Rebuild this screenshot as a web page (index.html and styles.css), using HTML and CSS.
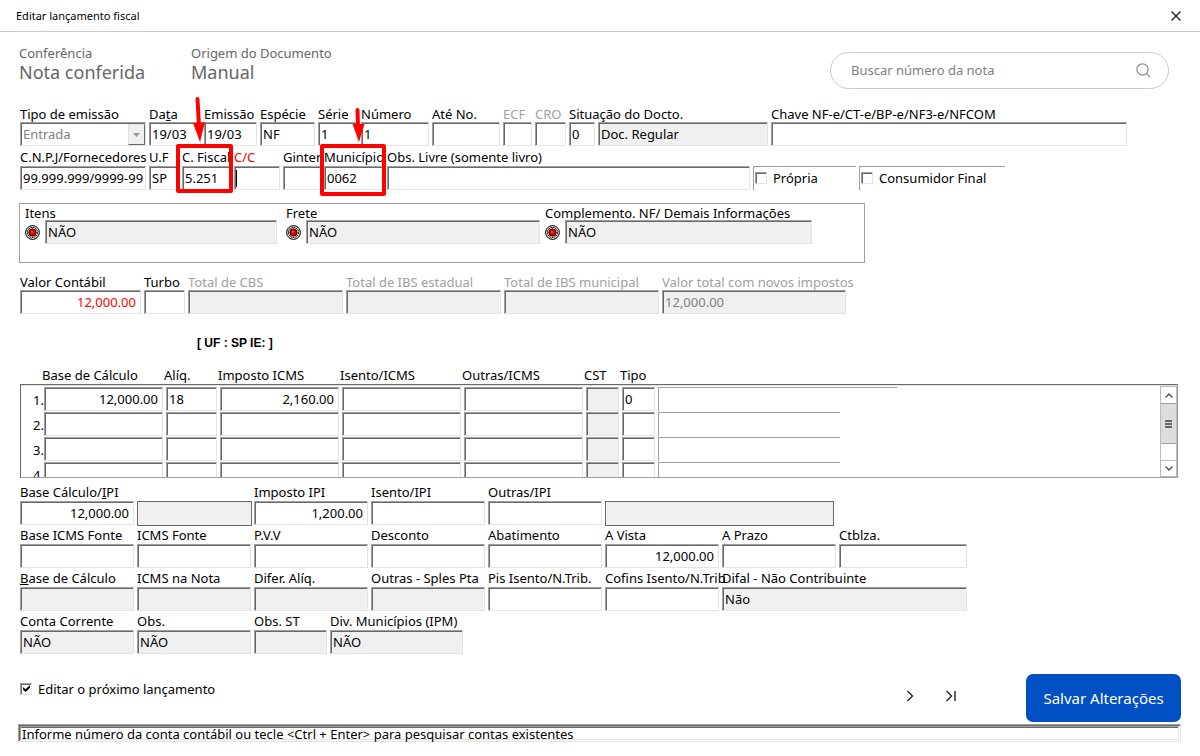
FILE: index.html
```html
<!DOCTYPE html>
<html lang="pt-BR">
<head>
<meta charset="utf-8">
<title>Editar lançamento fiscal</title>
<link rel="stylesheet" href="styles.css">
</head>
<body>
<svg class="defs" aria-hidden="true">
  <symbol id="led" viewBox="0 0 15 15">
    <circle cx="7.5" cy="7.5" r="6.900" fill="#d8d8d8" stroke="#000"/>
    <circle cx="7.5" cy="7.5" r="5" fill="#8a8a8a" stroke="#000" stroke-dasharray="1.5 .8"/>
    <circle cx="7.5" cy="7.5" r="3.500" fill="#e00000" stroke="#4a0000"/>
    <path d="M5.500 3.500h1M8.500 3.500h1M5.500 11.500h1M8.500 11.500h1M3.500 5.500v1M3.500 8.500v1M11.500 5.500v1M11.500 8.500v1" stroke="#ffd0d0"/>
    <circle cx="7" cy="7" r="1.200" fill="#ff3a2a"/>
  </symbol>
</svg>

<header class="titlebar">
  <h1 class="title">Editar lançamento fiscal</h1>
  <button class="close" type="button" aria-label="Fechar">
    <svg width="10" height="10" viewBox="0 0 10 10"><path d="M.5.5l9 9M9.5.5l-9 9" stroke="#222" stroke-width="1.4"/></svg>
  </button>
</header>

<main class="page">
  <section class="summary">
    <div class="summary-item">
      <div class="summary-label">Conferência</div>
      <div class="summary-value">Nota conferida</div>
    </div>
    <div class="summary-item">
      <div class="summary-label">Origem do Documento</div>
      <div class="summary-value">Manual</div>
    </div>
    <label class="search">
      <input class="search-input" type="text" placeholder="Buscar número da nota" aria-label="Buscar número da nota">
      <svg width="15" height="15" viewBox="0 0 15 15" fill="none" stroke="#8c8c8c" stroke-width="1.2"><circle cx="6.5" cy="6.5" r="5.6"/><path d="M10.6 10.6l3.4 3.4"/></svg>
    </label>
  </section>

  <form class="form">
    <div class="row row-document">
      <div class="field disabled"><label for="tipo" class="dark">Tipo de emissão</label>
        <div class="select-wrap"><select id="tipo" class="box" disabled><option>Entrada</option></select><span class="drop"><svg width="7" height="4" viewBox="0 0 7 4"><path d="M0 0h7L3.5 4z" fill="#999"/></svg></span></div></div>
      <div class="field"><label for="data">Da<u>t</u>a</label><input id="data" class="box" value="19/03"></div>
      <div class="field"><label for="emissao">Emissão</label><input id="emissao" class="box" value="19/03"></div>
      <div class="field"><label for="especie">Espécie</label><input id="especie" class="box" value="NF"></div>
      <div class="field"><label for="serie">Série</label><input id="serie" class="box" value="1"></div>
      <div class="field"><label for="numero">Número</label><input id="numero" class="box" value="1"></div>
      <div class="field"><label for="ate">Até No.</label><input id="ate" class="box"></div>
      <div class="field disabled"><label for="ecf">ECF</label><input id="ecf" class="box"></div>
      <div class="field disabled"><label for="cro">CRO</label><input id="cro" class="box"></div>
      <div class="field"><label for="sit">Situação do Docto.</label><input id="sit" class="box" value="0"></div>
      <div class="field field-bare"><input class="box readonly" value="Doc. Regular" aria-label="Descrição da situação" readonly></div>
      <div class="field"><label for="chave">Chave NF-e/CT-e/BP-e/NF3-e/NFCOM</label><input id="chave" class="box"></div>
    </div>

    <div class="row row-supplier">
      <div class="field"><label for="cnpj">C.N.P.J/Fornecedores</label><input id="cnpj" class="box" value="99.999.999/9999-99"></div>
      <div class="field"><label for="uf">U.F</label><input id="uf" class="box" value="SP"></div>
      <div class="field"><label for="cfiscal">C. Fiscal</label><input id="cfiscal" class="box" value="5.251">
        <span class="callout callout-fiscal"><svg class="arrow" width="14" height="48" viewBox="0 0 14 48"><path d="M5.5 3L7 30" stroke="#f00" stroke-width="4" stroke-linecap="round"/><path d="M1 27l12-1-5 20z" fill="#f00"/></svg></span></div>
      <div class="field red"><label for="cc">C/C</label><input id="cc" class="box caret"></div>
      <div class="field"><label for="ginter">Ginter</label><input id="ginter" class="box"></div>
      <div class="field"><label for="municipio">Município</label><input id="municipio" class="box" value="0062">
        <span class="callout callout-city"><svg class="arrow" width="14" height="37" viewBox="0 0 14 37"><path d="M6.5 3L7 20" stroke="#f00" stroke-width="4" stroke-linecap="round"/><path d="M1.500 17h12l-5.500 18z" fill="#f00"/></svg></span></div>
      <div class="field"><label for="livre">Obs. Livre (somente livro)</label><input id="livre" class="box"></div>
      <label class="check check-framed"><input type="checkbox">Própria</label>
      <label class="check check-framed"><input type="checkbox">Consumidor Final</label>
    </div>

    <section class="group">
      <div class="group-item"><label for="itens">Itens</label><div class="led-line"><svg class="led"><use href="#led"/></svg><input id="itens" class="box readonly" value="NÃO" readonly></div></div>
      <div class="group-item"><label for="frete">Frete</label><div class="led-line"><svg class="led"><use href="#led"/></svg><input id="frete" class="box readonly" value="NÃO" readonly></div></div>
      <div class="group-item"><label for="compl">Complemento. NF/ Demais Informações</label><div class="led-line"><svg class="led"><use href="#led"/></svg><input id="compl" class="box readonly" value="NÃO" readonly></div></div>
    </section>

    <div class="row row-totals">
      <div class="field"><label for="valor">Valor Contábil</label><input id="valor" class="box num red-text" value="12,000.00"></div>
      <div class="field"><label for="turbo">Turbo</label><input id="turbo" class="box"></div>
      <div class="field disabled"><label for="cbs">Total de CBS</label><input id="cbs" class="box readonly" readonly></div>
      <div class="field disabled"><label for="ibse">Total de IBS estadual</label><input id="ibse" class="box readonly" readonly></div>
      <div class="field disabled"><label for="ibsm">Total de IBS municipal</label><input id="ibsm" class="box readonly" readonly></div>
      <div class="field disabled"><label for="novos">Valor total com novos impostos</label><input id="novos" class="box readonly" value="12,000.00" readonly></div>
    </div>

    <p class="uf-line">[ UF : SP IE: ]</p>

    <div class="icms">
      <table class="icms-table">
        <thead><tr><th></th><th>Base de Cálculo</th><th>Alíq.</th><th>Imposto ICMS</th><th>Isento/ICMS</th><th>Outras/ICMS</th><th>CST</th><th>Tipo</th></tr></thead>
        <tbody>
          <tr><th>1.</th><td><input class="box num" value="12,000.00" aria-label="Base 1"></td><td><input class="box" value="18" aria-label="Alíquota 1"></td><td><input class="box num" value="2,160.00" aria-label="Imposto 1"></td><td><input class="box" aria-label="Isento 1"></td><td><input class="box" aria-label="Outras 1"></td><td><input class="box readonly" aria-label="CST 1" readonly></td><td><input class="box" value="0" aria-label="Tipo 1"></td><td class="note note-wide"></td></tr>
          <tr><th>2.</th><td><input class="box" aria-label="Base 2"></td><td><input class="box" aria-label="Alíquota 2"></td><td><input class="box" aria-label="Imposto 2"></td><td><input class="box" aria-label="Isento 2"></td><td><input class="box" aria-label="Outras 2"></td><td><input class="box readonly" aria-label="CST 2" readonly></td><td><input class="box" aria-label="Tipo 2"></td><td class="note"></td></tr>
          <tr><th>3.</th><td><input class="box" aria-label="Base 3"></td><td><input class="box" aria-label="Alíquota 3"></td><td><input class="box" aria-label="Imposto 3"></td><td><input class="box" aria-label="Isento 3"></td><td><input class="box" aria-label="Outras 3"></td><td><input class="box readonly" aria-label="CST 3" readonly></td><td><input class="box" aria-label="Tipo 3"></td><td class="note"></td></tr>
          <tr><th>4.</th><td><input class="box" aria-label="Base 4"></td><td><input class="box" aria-label="Alíquota 4"></td><td><input class="box" aria-label="Imposto 4"></td><td><input class="box" aria-label="Isento 4"></td><td><input class="box" aria-label="Outras 4"></td><td><input class="box readonly" aria-label="CST 4" readonly></td><td><input class="box" aria-label="Tipo 4"></td><td class="note"></td></tr>
        </tbody>
      </table>
      <div class="scrollbar">
        <button type="button" class="scroll-btn" aria-label="Rolar para cima"><svg width="8" height="5" viewBox="0 0 8 5" fill="none" stroke="#555" stroke-width="1.5"><path d="M.5 4.500L4 1l3.500 3.500"/></svg></button>
        <span class="thumb"><svg width="7" height="8" viewBox="0 0 7 8"><path d="M0 1h7M0 4h7M0 7h7" stroke="#666" stroke-width="2"/></svg></span>
        <button type="button" class="scroll-btn scroll-down" aria-label="Rolar para baixo"><svg width="8" height="5" viewBox="0 0 8 5" fill="none" stroke="#555" stroke-width="1.5"><path d="M.5.5L4 4 7.500.5"/></svg></button>
      </div>
    </div>

    <div class="row row-taxes">
      <div class="field"><label for="bipi">Base Cálculo/<u>I</u>PI</label><input id="bipi" class="box num" value="12,000.00"></div>
      <div class="field field-bare"><div class="panel"></div></div>
      <div class="field"><label for="iipi">Imposto IPI</label><input id="iipi" class="box num" value="1,200.00"></div>
      <div class="field"><label for="isipi">Isento/IPI</label><input id="isipi" class="box"></div>
      <div class="field"><label for="oipi">Outras/IPI</label><input id="oipi" class="box"></div>
      <div class="field field-bare span-2"><div class="panel panel-wide"></div></div>
    </div>
    <div class="row row-taxes">
      <div class="field"><label for="bfonte">Base ICMS Fonte</label><input id="bfonte" class="box"></div>
      <div class="field"><label for="ifonte">ICMS Fonte</label><input id="ifonte" class="box"></div>
      <div class="field"><label for="pvv">P.V.V</label><input id="pvv" class="box"></div>
      <div class="field"><label for="desc">Desconto</label><input id="desc" class="box"></div>
      <div class="field"><label for="abat">Abatimento</label><input id="abat" class="box"></div>
      <div class="field"><label for="vista">A Vista</label><input id="vista" class="box num" value="12,000.00"></div>
      <div class="field"><label for="prazo">A Prazo</label><input id="prazo" class="box"></div>
      <div class="field"><label for="ctb">Ctblza.</label><input id="ctb" class="box"></div>
    </div>
    <div class="row row-taxes">
      <div class="field"><label for="bcalc"><u>B</u>ase de Cálculo</label><input id="bcalc" class="box readonly" readonly></div>
      <div class="field"><label for="inota">ICMS na Nota</label><input id="inota" class="box readonly" readonly></div>
      <div class="field"><label for="difer">Difer. Alíq.</label><input id="difer" class="box readonly" readonly></div>
      <div class="field"><label for="sples">Outras - Sples Pta</label><input id="sples" class="box readonly" readonly></div>
      <div class="field"><label for="pis">Pis Isento/N.Trib.</label><input id="pis" class="box"></div>
      <div class="field"><label for="cofins">Cofins Isento/N.Trib</label><input id="cofins" class="box"></div>
      <div class="field span-2"><label for="difal">Difal - Não Contribuinte</label><input id="difal" class="box readonly" value="Não" readonly></div>
    </div>
    <div class="row row-notes">
      <div class="field"><label for="conta">Conta Corrente</label><input id="conta" class="box readonly" value="NÃO" readonly></div>
      <div class="field"><label for="obs">Obs.</label><input id="obs" class="box readonly" value="NÃO" readonly></div>
      <div class="field"><label for="obsst">Obs. ST</label><input id="obsst" class="box readonly" readonly></div>
      <div class="field"><label for="ipm">Div. Municípios (IPM)</label><input id="ipm" class="box readonly" value="NÃO" readonly></div>
    </div>

    <div class="actions">
      <label class="check"><input type="checkbox" checked>Editar o próximo lançamento</label>
      <div class="nav">
        <button type="button" class="nav-btn" aria-label="Próximo"><svg width="12" height="12" viewBox="0 0 12 12" fill="none" stroke="#222" stroke-width="1.4"><path d="M3.500 1l5 5-5 5"/></svg></button>
        <button type="button" class="nav-btn" aria-label="Último"><svg width="12" height="12" viewBox="0 0 12 12" fill="none" stroke="#222" stroke-width="1.4"><path d="M1.500 1l5 5-5 5M10 1v10"/></svg></button>
      </div>
      <button type="button" class="save">Salvar Alterações</button>
    </div>
  </form>

  <footer class="status"><div class="status-text">Informe número da conta contábil ou tecle &lt;Ctrl + Enter&gt; para pesquisar contas existentes</div></footer>
</main>
</body>
</html>
```
FILE: styles.css
```css
* { box-sizing: border-box; }
body {
  margin: 0;
  background: #fff;
  color: #000;
  font: 13px/18px "Noto Sans", "Open Sans", sans-serif;
}
input, select, button { font: inherit; color: inherit; }
.defs { position: absolute; width: 0; height: 0; }

.titlebar {
  display: flex;
  align-items: center;
  justify-content: space-between;
  height: 32px;
  padding: 0 19px 0 16px;
  border-bottom: 1px solid #ccc;
}
.title { margin: 0; padding-top: 1px; font-size: 11px; font-weight: 400; }
.close { display: flex; padding: 0; border: 0; background: none; }

.page { padding: 0 19px 0 20px; }

.summary {
  display: flex;
  align-items: flex-start;
  height: 71px;
  margin-left: -1px;
  padding-top: 12px;
  color: #666;
}
.summary-item { width: 172px; white-space: nowrap; }
.summary-label { line-height: 18px; }
.summary-value { font-size: 18px; line-height: 20px; }
.search {
  display: flex;
  align-items: center;
  width: 339px;
  height: 37px;
  margin: 8px 12px 0 auto;
  padding: 0 17px 0 20px;
  border: 1px solid #ccc;
  border-radius: 20px;
}
.search-input {
  flex: 1;
  min-width: 0;
  padding: 0 0 2px;
  border: 0;
  outline: 0;
  background: none;
}
.search-input::placeholder { color: #808080; opacity: 1; }

.row { display: grid; column-gap: 3px; }
.row-document { grid-template-columns: 126fr 52fr 53fr 55fr 40fr 68fr 68fr 29fr 31fr 26fr 170fr 356fr 51fr; }
.row-supplier { grid-template-columns: 126fr 30fr 49fr 46fr 38fr 60fr 363fr 103fr 146fr 173fr; margin-top: 1px; }
.row-totals { grid-template-columns: 121fr 41fr 155fr 155fr 155fr 184fr 332fr; margin-top: 8px; }
.row-taxes { grid-template-columns: repeat(7, 114fr) 128fr 211fr; height: 43px; }
.row-notes { grid-template-columns: 114fr 114fr 73fr 133fr 715fr; }
.span-2 { grid-column: span 2; }

.field { position: relative; min-width: 0; }
.field > label { display: block; height: 19px; line-height: 20px; white-space: nowrap; }
.row-document label, .row-totals label { line-height: 22px; }
.field-bare { padding-top: 19px; }
.disabled, .disabled .box { color: #a0a0a0; }
.disabled .readonly, .disabled select.box { color: #808080; }
.disabled .dark { color: #000; }
.red > label { color: #f00; }

.box {
  display: block;
  width: 100%;
  height: 24px;
  padding: 0 2px 1px;
  border: 1px solid #a0a0a0;
  border-right-color: #e3e3e3;
  border-bottom-color: #e3e3e3;
  border-radius: 0;
  outline: 0;
  background: #fff;
  box-shadow: inset 1px 1px #696969;
}
.readonly { background: #f0f0f0; }
.num { padding-right: 4px; text-align: right; }
.red-text { color: #f00; }
.caret { background: linear-gradient(#000, #000) 1px 3px / 1px 17px no-repeat; }

.select-wrap { position: relative; }
select.box { appearance: none; opacity: 1; }
.drop {
  position: absolute;
  top: 2px;
  right: 1px;
  display: flex;
  align-items: center;
  justify-content: center;
  width: 17px;
  height: 21px;
  border: 1px solid #e3e3e3;
  border-right-color: #696969;
  border-bottom-color: #696969;
  background: #f0f0f0;
}

.callout {
  position: absolute;
  z-index: 1;
  top: -3px;
  border: 4px solid #f00;
  border-radius: 2px;
  pointer-events: none;
}
.callout-fiscal { left: -6px; right: -2px; bottom: -3px; }
.callout-city { left: -4px; right: -2px; bottom: -6px; }
.arrow { position: absolute; bottom: calc(100% + 4px); }
.callout-fiscal .arrow { left: 12px; }
.callout-city .arrow { left: 27px; }

.check { display: flex; align-items: center; gap: 6px; white-space: nowrap; }
.check input {
  position: relative;
  appearance: none;
  width: 12px;
  height: 12px;
  margin: 0;
  border: 1px solid #a0a0a0;
  border-right-color: #e3e3e3;
  border-bottom-color: #e3e3e3;
  box-shadow: inset 1px 1px #696969;
}
.check input:checked::after {
  content: "";
  position: absolute;
  left: 2px;
  top: 1px;
  width: 7px;
  height: 7px;
  background: #000;
  clip-path: polygon(0 30%, 0 65%, 36% 100%, 100% 38%, 100% 0, 36% 62%);
}
.check-framed {
  height: 24px;
  margin-top: 19px;
  padding: 0 0 1px 1px;
  border: solid #a0a0a0;
  border-width: 1px 0 0 1px;
}

.group {
  display: grid;
  grid-template-columns: 261fr 259fr 267fr 52fr;
  max-width: 846px;
  height: 60px;
  margin: 13px 0 0 -1px;
  padding-left: 5px;
  border: 1px solid #a0a0a0;
}
.group-item { padding-right: 5px; white-space: nowrap; }
.group-item:first-child { padding-right: 9px; }
.group-item:nth-child(3) { padding-right: 0; }
.group-item > label { display: block; height: 16px; }
.led-line { display: flex; align-items: center; gap: 5px; }
.led { flex: none; width: 15px; height: 15px; }

.uf-line {
  margin: 20px 0 0 177px;
  font: bold 12px/18px "Liberation Sans", Arial, sans-serif;
}

.icms { position: relative; margin: 14px 3px 4px 0; }
.icms-table, .icms-table thead, .icms-table tbody { display: block; }
.icms-table tr { display: grid; grid-template-columns: 23fr 122fr 54fr 122fr 122fr 122fr 36fr 36fr 519fr; }
.icms-table thead tr { height: 18px; grid-template-columns: 22fr 122fr 54fr 122fr 122fr 122fr 36fr 36fr 522fr; }
.icms-table thead th { padding: 0; font-weight: 400; text-align: left; white-space: nowrap; }
.icms-table tbody {
  height: 94px;
  padding-top: 2px;
  overflow: hidden;
  border: 1px solid #a0a0a0;
  border-top-color: #696969;
  border-left-color: #696969;
  box-shadow: inset 0 1px #e3e3e3;
}
.icms-table tbody tr { height: 25px; }
.icms-table tbody th { padding: 4px 0 0; font-weight: 400; text-align: right; }
.icms-table td { padding: 0 3px 0 0; }
.icms-table .note {
  width: 35%;
  border: solid #a0a0a0;
  border-width: 1px 0 0 1px;
  height: 24px;
}
.icms-table .note-wide { width: 46%; }
.scrollbar {
  position: absolute;
  top: 20px;
  right: 1px;
  bottom: 1px;
  display: flex;
  flex-direction: column;
  width: 17px;
  border: 1px solid #bbb;
}
.scroll-btn {
  display: flex;
  align-items: center;
  justify-content: center;
  height: 16px;
  padding: 0;
  border: 0;
  background: #fff;
}
.scroll-down { margin-top: auto; border-top: 1px solid #bbb; }
.thumb {
  display: flex;
  align-items: center;
  justify-content: center;
  height: 41px;
  border: solid #a0a0a0;
  border-width: 1px 0;
  background: #ddd;
}

.panel { height: 25px; margin-right: -1px; border: 1px solid #696969; background: #f0f0f0; }
.panel-wide { margin-right: 2px; }

.actions { display: flex; align-items: flex-start; height: 48px; margin-top: 20px; }
.actions .check { margin-top: 6px; }
.nav { display: flex; gap: 29px; margin: 16px 69px 0 auto; }
.nav-btn { display: flex; padding: 0; border: 0; background: none; }
.save {
  width: 155px;
  height: 48px;
  padding: 0;
  border: 0;
  border-radius: 7px;
  background: #0050c3;
  color: #fff;
  font-size: 15px;
}

.status {
  margin: 2px 0 0 -2px;
  border: 1px solid #a0a0a0;
  border-right-color: #e3e3e3;
  border-bottom-color: #e3e3e3;
  box-shadow: inset 1px 1px #696969;
  padding: 1px;
}
.status-text {
  height: 14px;
  padding-left: 1px;
  border: 1px solid #a0a0a0;
  border-right-color: #e3e3e3;
  border-bottom-color: #e3e3e3;
  box-shadow: inset 0 1px #696969;
  line-height: 15px;
  white-space: nowrap;
}
```
